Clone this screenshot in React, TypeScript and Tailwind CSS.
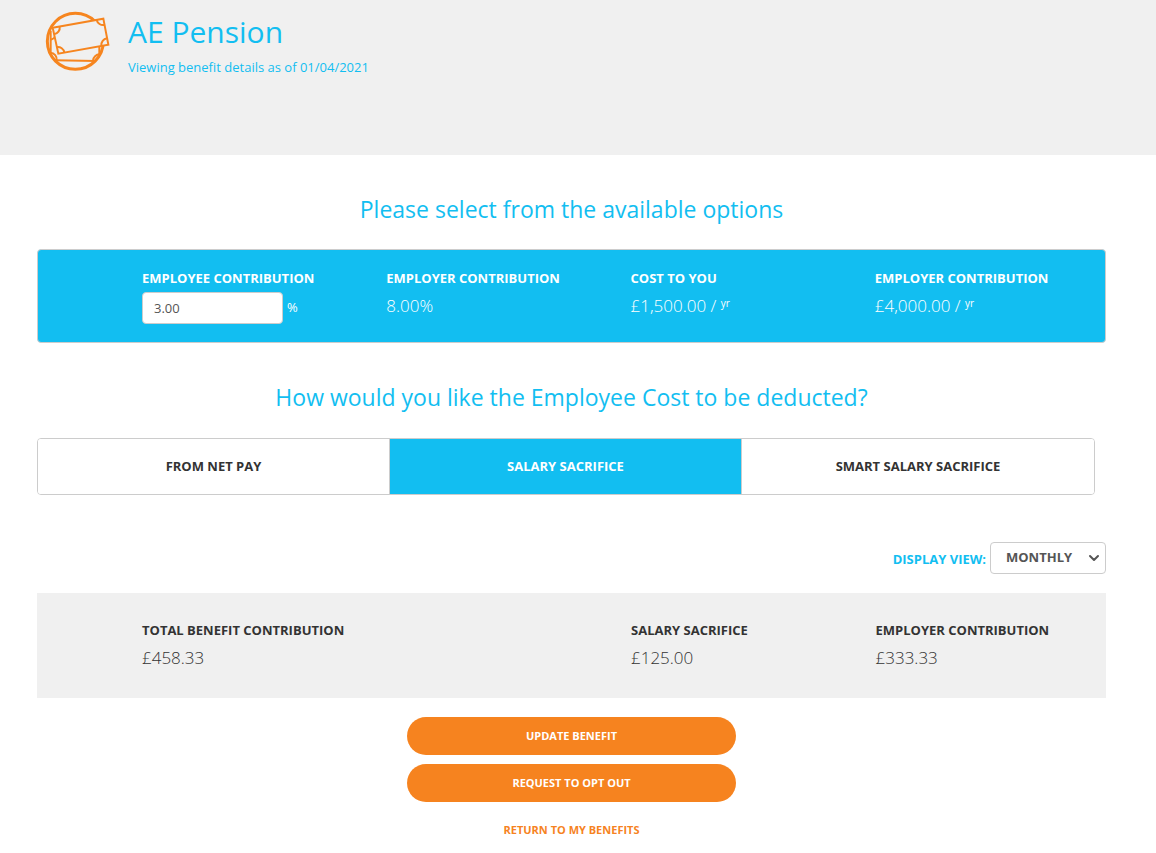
import { useState } from 'react';
import { ChevronDown } from 'lucide-react';

const deductionOptions = ['From net pay', 'Salary sacrifice', 'Smart salary sacrifice'];

const BanknotesIcon = () => (
    <svg className="h-[66px] w-[66px] shrink-0" viewBox="42 24 198 198" fill="none" stroke="#f6851f" strokeWidth="6" aria-hidden="true">
        <circle cx="136" cy="124" r="84" strokeWidth="9" />
        {/* back note */}
        <path d="M62 92V162M76 181L196 183M208 138V162" />
        <path d="M61 119A16 16 0 0 0 76 104M61 158A20 20 0 0 1 80 181M189 182A20 20 0 0 1 209 163" />
        {/* front note */}
        <path d="M68 83L220 56L235 134L85 161Z" fill="#f0f0f0" />
        <path d="M72 103A20 20 0 0 0 89 80M200 60A20 20 0 0 0 223 75M231 115A20 20 0 0 0 214 137M81 141A20 20 0 0 1 103 157" />
    </svg>
);

const Figure = ({ label, value, unit, className = '' }: { label: string; value: string; unit?: string; className?: string }) => (
    <div className={className}>
        <dt className="text-[13px] leading-5 font-bold uppercase">{label}</dt>
        <dd className="mt-1 text-[17px] leading-7 font-light">
            {value}
            {unit && <> / <sup className="text-[10px] font-normal">{unit}</sup></>}
        </dd>
    </div>
);

const App = () => {
    const [contribution, setContribution] = useState('3.00');
    const [deduction, setDeduction] = useState('Salary sacrifice');
    const [view, setView] = useState('Monthly');

    return (
        <div className="bg-white font-['Open_Sans','Noto_Sans',sans-serif] text-[#333333]">
            <header className="flex min-h-[155px] items-start gap-[18px] bg-[#f0f0f0] pt-2 pl-11 text-[#12bef1]">
                <BanknotesIcon />
                <div className="pt-1">
                    <h1 className="text-[30px] leading-10">AE Pension</h1>
                    <p className="mt-[5px] text-[13px] leading-5">Viewing benefit details as of 01/04/2021</p>
                </div>
            </header>

            <main className="pt-9 pr-[50px] pb-3 pl-[37px]">
                <h2 className="text-center text-[23px] leading-9 text-[#12bef1]">Please select from the available options</h2>
                <dl className="mt-[22px] grid min-h-[94px] grid-cols-[244fr_244fr_244fr_230fr] rounded border border-[#cccccc] bg-[#12bef1] pt-[18px] pl-[104px] text-white">
                    <div>
                        <dt className="text-[13px] leading-5 font-bold uppercase">
                            <label htmlFor="contribution">Employee contribution</label>
                        </dt>
                        <dd className="mt-1 flex items-center gap-1 text-[13px]">
                            <input
                                id="contribution"
                                type="text"
                                className="h-8 w-[141px] rounded border border-[#cccccc] bg-white px-[11px] text-[#555555]"
                                value={contribution}
                                onChange={(e) => setContribution(e.target.value)}
                            />
                            %
                        </dd>
                    </div>
                    <Figure label="Employer contribution" value="8.00%" />
                    <Figure label="Cost to you" value="£1,500.00" unit="yr" />
                    <Figure label="Employer contribution" value="£4,000.00" unit="yr" />
                </dl>

                <h2 className="mt-9 text-center text-[23px] leading-9 text-[#12bef1]">How would you like the Employee Cost to be deducted?</h2>
                <div className="mt-[23px] mr-[11px] grid grid-cols-3 divide-x divide-[#cccccc] overflow-hidden rounded border border-[#cccccc]">
                    {deductionOptions.map((option) => (
                        <button
                            key={option}
                            type="button"
                            aria-pressed={option === deduction}
                            onClick={() => setDeduction(option)}
                            className={`h-[55px] text-[13px] font-bold uppercase ${option === deduction ? 'bg-[#12bef1] text-white' : 'bg-white'}`}
                        >
                            {option}
                        </button>
                    ))}
                </div>

                <div className="mt-[47px] flex items-center justify-end gap-1 text-[13px] font-bold uppercase">
                    <label htmlFor="view" className="pt-[3px] text-[#12bef1]">Display view:</label>
                    <div className="grid items-center">
                        <select
                            id="view"
                            className="col-start-1 row-start-1 h-8 w-[116px] appearance-none rounded border border-[#cccccc] bg-white pl-[15px] uppercase text-[#555555]"
                            value={view}
                            onChange={(e) => setView(e.target.value)}
                        >
                            <option>Monthly</option>
                            <option>Annual</option>
                        </select>
                        <ChevronDown className="pointer-events-none col-start-1 row-start-1 mr-1 h-4 w-4 justify-self-end text-[#555555]" strokeWidth={3} />
                    </div>
                </div>

                <dl className="mt-[19px] grid min-h-[105px] grid-cols-[244fr_244fr_244fr_230fr] bg-[#f0f0f0] pt-[27px] pl-[105px]">
                    <Figure label="Total benefit contribution" value="£458.33" className="col-span-2" />
                    <Figure label="Salary sacrifice" value="£125.00" />
                    <Figure label="Employer contribution" value="£333.33" />
                </dl>

                <div className="mt-[19px] flex flex-col items-center gap-[9px] text-[11px] font-bold">
                    <button type="button" className="h-[38px] w-[329px] rounded-full bg-[#f6831f] text-white uppercase">Update benefit</button>
                    <button type="button" className="h-[38px] w-[329px] rounded-full bg-[#f6831f] text-white uppercase">Request to opt out</button>
                    <a href="#benefits" className="mt-[9px] leading-5 text-[#f6831f] uppercase">Return to my benefits</a>
                </div>
            </main>
        </div>
    );
};

export default App;
